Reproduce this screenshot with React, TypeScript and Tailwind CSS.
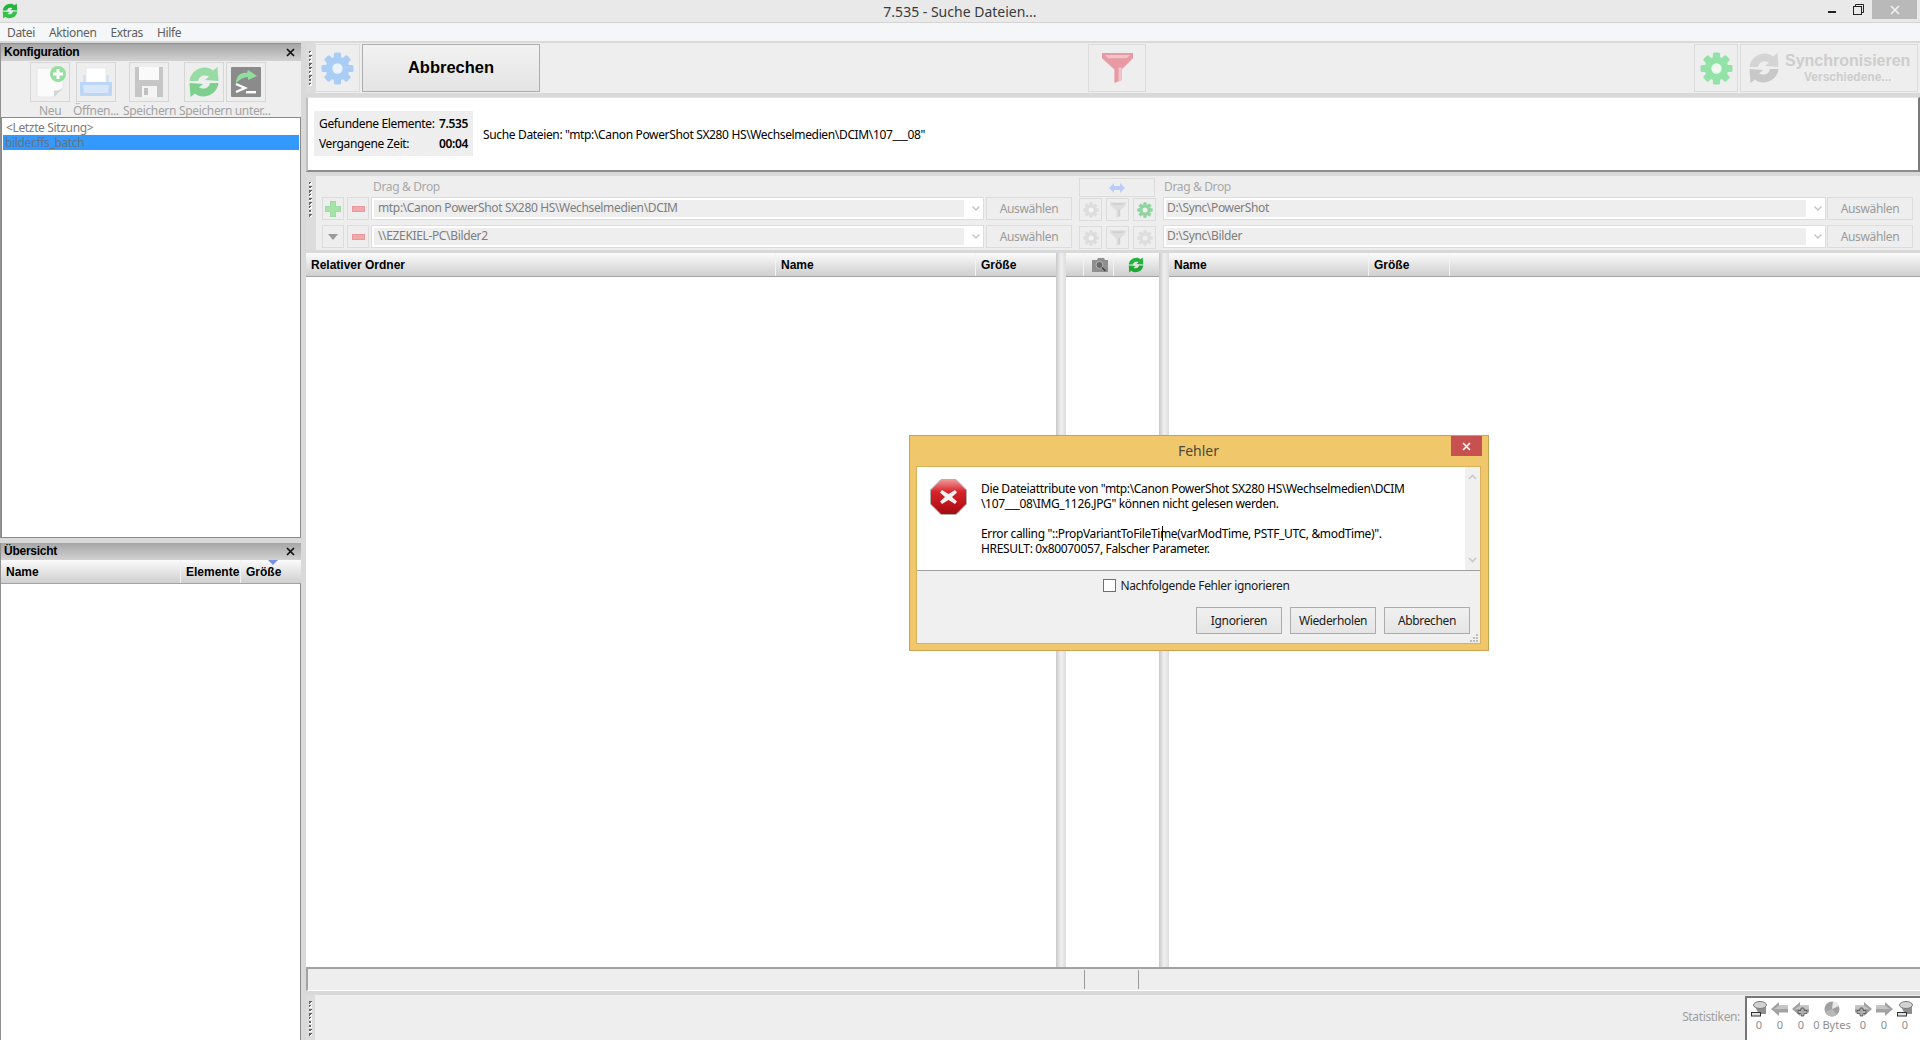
import type { ReactNode } from 'react';

const toothAngles = [0, 45, 90, 135, 180, 225, 270, 315];

function Gear({ size, color, hole }: { size: number; color: string; hole: string }) {
  return (
    <svg width={size} height={size} viewBox="0 0 32 32">
      {toothAngles.map((a) => (
        <rect key={a} x="12.5" y="0.5" width="7" height="8" rx="1.5" fill={color} transform={`rotate(${a} 16 16)`} />
      ))}
      <circle cx="16" cy="16" r="11.5" fill={color} />
      <circle cx="16" cy="16" r="5" fill={hole} />
    </svg>
  );
}

function SyncIcon({ size, top, bottom }: { size: number; top: string; bottom: string }) {
  const arrow = 'M1.5 15 C2.5 7 9 1.5 17 1.5 C20 1.5 23 2.5 25 4.5 L29.5 1 L30.5 15 L17 14 L21 10.5 C19.5 9.8 18 9.5 16 9.5 C13 9.5 10.5 12 10 15 Z';
  return (
    <svg width={size} height={size} viewBox="0 0 32 32">
      <path d={arrow} fill={top} />
      <path d={arrow} fill={bottom} transform="rotate(180 16 16)" />
    </svg>
  );
}

function Funnel({ width, height, color, stem }: { width: number; height: number; color: string; stem: string }) {
  return (
    <svg width={width} height={height} viewBox="0 0 30 29">
      <path d="M0 0 H30 V5 L19 16 V26 L12 29 V16 L0 5 Z" fill={color} />
      <path d="M3 2 H27 L24 5 H6 Z" fill={stem} />
      <path d="M16 14 H19 V26 L16 27.5 Z" fill={stem} />
    </svg>
  );
}

function NewIcon() {
  return (
    <svg width="32" height="32" viewBox="0 0 32 32">
      <path d="M3 2 H22 L29 10 V22 L20 31 H3 Z" fill="#fbfbfb" stroke="#e6e6e6" />
      <path d="M20 31 L29 22 C26 24 23 25 20 24.5 Z" fill="#d4d4d4" />
      <circle cx="24" cy="8" r="8" fill="#97df9f" />
      <path d="M22.5 3 H25.5 V6.5 H29 V9.5 H25.5 V13 H22.5 V9.5 H19 V6.5 H22.5 Z" fill="#ffffff" />
    </svg>
  );
}

function OpenIcon() {
  return (
    <svg width="32" height="30" viewBox="0 0 32 30">
      <rect x="3" y="8" width="26" height="12" fill="#cfe0f7" />
      <rect x="6" y="1" width="20" height="17" fill="#ffffff" stroke="#e9e9e9" />
      <path d="M0 15 H32 V28 Q32 29 31 29 H1 Q0 29 0 28 Z" fill="#bcd6f5" />
      <path d="M3 18 H29 L28 26 H4 Z" fill="#d7e6f9" />
    </svg>
  );
}

function SaveIcon() {
  return (
    <svg width="28" height="30" viewBox="0 0 28 30">
      <path d="M0 0 H28 V30 H0 Z" fill="#c6c6c6" />
      <rect x="4" y="0" width="20" height="13" fill="#fafafa" />
      <rect x="7" y="19" width="15" height="11" fill="#f4f4f4" />
      <rect x="9" y="21" width="4" height="7" fill="#c0c0c0" />
    </svg>
  );
}

function ScriptIcon() {
  return (
    <svg width="30" height="30" viewBox="0 0 30 30">
      <rect x="0" y="0" width="30" height="30" rx="1" fill="#8b8b8b" />
      <path d="M5 16 C5 9 10 5 16 6 L17 3 L26 9 L17 13 L17 10 C13 10 9 12 5 16 Z" fill="#93dda0" />
      <path d="M5 17 L14 21 L5 25" fill="none" stroke="#ffffff" strokeWidth="2.4" />
      <rect x="15" y="24" width="10" height="2.4" fill="#ffffff" />
    </svg>
  );
}

function CameraIcon() {
  return (
    <svg width="16" height="14" viewBox="0 0 16 14">
      <path d="M0 2 H5 L6 0 H12 L13 2 H16 V14 H0 Z" fill="#8f8f8f" />
      <circle cx="7.5" cy="7" r="3.5" fill="#6a6a6a" stroke="#b5b5b5" />
      <path d="M10 9.5 L13.5 13" stroke="#444" strokeWidth="1.6" />
    </svg>
  );
}

function Tool({ children, className }: { children: ReactNode; className?: string }) {
  return (
    <div className={`w-[40px] h-[40px] border border-[#d6d6d6] flex items-center justify-center shrink-0 ${className ?? ''}`}>{children}</div>
  );
}

function Grip({ className }: { className?: string }) {
  return (
    <div className={`w-[9px] shrink-0 bg-[#dcdcdc] flex flex-col items-center gap-[1px] ${className ?? ''}`}>
      {Array.from({ length: 9 }).map((_, i) => (
        <span key={i} className="w-[3px] h-[3px] bg-[linear-gradient(135deg,#666_50%,#fff_50%)]" />
      ))}
    </div>
  );
}

function PanelHeader({ title }: { title: string }) {
  return (
    <div className="h-[17px] shrink-0 bg-linear-to-b from-[#a6a6a6] to-[#d2d2d2] flex items-center justify-between pl-[3px] pr-[4px]">
      <span className="font-['Liberation_Sans',sans-serif] font-bold text-[12px] tracking-[-0.25px] text-black pb-[2px]">{title}</span>
      <svg width="11" height="11" viewBox="0 0 11 11" className="mr-[1px]">
        <path d="M2 2 L9 9 M9 2 L2 9" stroke="#111" strokeWidth="1.7" />
      </svg>
    </div>
  );
}

function HeadCell({ label, className, children }: { label?: string; className?: string; children?: ReactNode }) {
  return (
    <div className={`h-full border-r border-[#f2f2f2] pl-[5px] flex items-center font-['Liberation_Sans',sans-serif] font-bold text-[12px] tracking-normal text-black shrink-0 ${className ?? ''}`}>
      {label}
      {children}
    </div>
  );
}

function TableHead({ children }: { children: ReactNode }) {
  return (
    <div className="h-[24px] shrink-0 flex bg-linear-to-b from-[#fbfbfb] to-[#cfcfcf] border-b border-[#a3a3a3]">{children}</div>
  );
}

function Small({ children, className }: { children: ReactNode; className?: string }) {
  return (
    <div className={`h-[23px] border border-[#dcdcdc] flex items-center justify-center shrink-0 ${className ?? ''}`}>{children}</div>
  );
}

function Combo({ value, width, inner }: { value: string; width: string; inner: string }) {
  return (
    <div className={`h-[23px] border border-[#dcdcdc] bg-white flex items-center shrink-0 p-[2px] ${width}`}>
      <div className={`h-full bg-[#eeeeee] flex items-center pb-[1px] text-[12px] text-[#7d7d7d] ${inner}`}>{value}</div>
      <svg width="10" height="7" viewBox="0 0 10 7" className="ml-[7px]">
        <path d="M1.5 1.5 L5 5 L8.5 1.5" fill="none" stroke="#c4c4c4" strokeWidth="1.4" />
      </svg>
    </div>
  );
}

function Picker({ className }: { className: string }) {
  return <Small className={`w-[86px] text-[12px] text-[#9a9a9a] ${className}`}>Auswählen</Small>;
}

function MidGears({ green }: { green?: boolean }) {
  return (
    <div className="flex items-start gap-[4px] mt-[1px] ml-[7px] mr-[7px]">
      <Small className="w-[23px]"><Gear size={16} color="#dddddd" hole="#f4f4f4" /></Small>
      <Small className="w-[23px]"><Funnel width={16} height={18} color="#dedede" stem="#cfcfcf" /></Small>
      <Small className="w-[23px]"><Gear size={16} color={green ? '#8fd59f' : '#dddddd'} hole="#eeeeee" /></Small>
    </div>
  );
}

function Disk() {
  return (
    <svg width="16" height="16" viewBox="0 0 16 16">
      <path d="M3 4 L8 13 H15 V4 Z" fill="#8f8f8f" />
      <ellipse cx="9" cy="4" rx="6.5" ry="3.5" fill="#d2d2d2" stroke="#7a7a7a" />
      <rect x="0.5" y="11.5" width="9" height="3.5" fill="#e2e2e2" stroke="#333" />
    </svg>
  );
}

function StatArrow({ flip, plus }: { flip?: boolean; plus?: boolean }) {
  return (
    <svg width="18" height="16" viewBox="0 0 18 16" className={flip ? '-scale-x-100' : ''}>
      <path d="M0 8 L8 1 V4.5 H17 V11.5 H8 V15 Z" fill="#a2a2a2" />
      <path d="M8 4.5 H17 V8 H3 Z" fill="#c4c4c4" />
      {plus ? <path d="M9 7 H12 V9.5 H15 V12.5 H12 V15 H9 V12.5 H6 V9.5 H9 Z" fill="#b0b0b0" stroke="#444" strokeWidth="0.7" /> : null}
    </svg>
  );
}

function Pie() {
  return (
    <svg width="18" height="16" viewBox="0 0 18 16">
      <circle cx="9" cy="8" r="7.5" fill="#a0a0a0" />
      <path d="M9 8 L16 5 A7.5 7.5 0 0 0 10 0.6 Z" fill="#e8e8e8" />
      <path d="M9 8 L2 11 A7.5 7.5 0 0 0 14 13.5 Z" fill="#b8b8b8" />
    </svg>
  );
}

function StatCell({ icon, value, className }: { icon: ReactNode; value: string; className: string }) {
  return (
    <div className={`flex flex-col items-center shrink-0 ${className}`}>
      <div className="h-[18px] flex items-center">{icon}</div>
      <span className="text-[11px] leading-[14px] tracking-normal text-[#8e8e8e]">{value}</span>
    </div>
  );
}

function DialogButton({ label }: { label: string }) {
  return (
    <div className="w-[86px] h-[27px] border border-[#acacac] bg-linear-to-b from-[#f0f0f0] to-[#e5e5e5] flex items-center justify-center text-[12px] text-[#1a1a1a]">
      {label}
    </div>
  );
}

export default function App() {
  return (
    <div className="w-[1920px] h-[1040px] overflow-hidden relative flex flex-col bg-[#d9d9d9] font-['Noto_Sans',sans-serif] tracking-[-0.35px]">
      {/* title bar */}
      <div className="h-[23px] shrink-0 bg-[#e9e9e9] border-b border-[#d4d4d4] grid grid-cols-[1fr_auto_1fr]">
        <div className="pl-[2px] pt-[3px]">
          <SyncIcon size={16} top="#22b53c" bottom="#35c24c" />
        </div>
        <div className="text-[14px] leading-[23px] text-[#3a3a3a] tracking-normal">7.535 - Suche Dateien...</div>
        <div className="flex justify-end items-start pr-[3px]">
          <div className="w-[8px] h-[2px] bg-[#222] mt-[11px] mr-[17px]" />
          <svg width="11" height="11" viewBox="0 0 11 11" className="mt-[4px] mr-[8px]">
            <rect x="0.5" y="2.5" width="8" height="8" fill="none" stroke="#222" />
            <path d="M2.5 2.5 V0.5 H10.5 V8.5 H8.5" fill="none" stroke="#222" />
          </svg>
          <div className="w-[45px] h-[19px] bg-[#b9b9b9] flex items-center justify-center">
            <svg width="10" height="10" viewBox="0 0 10 10">
              <path d="M1 1 L9 9 M9 1 L1 9" stroke="#f2f2f2" strokeWidth="1.6" />
            </svg>
          </div>
        </div>
      </div>
      {/* menu */}
      <div className="h-[18px] shrink-0 bg-[#f5f6f7] flex items-center pl-[7px] pt-[2px] gap-[14px] text-[12px] text-[#5e5e5e]">
        <span>Datei</span>
        <span>Aktionen</span>
        <span>Extras</span>
        <span>Hilfe</span>
      </div>

      <div className="flex-1 min-h-0 flex pt-[2px]">
        {/* left column */}
        <div className="w-[301px] mr-[5px] shrink-0 flex flex-col">
          <div className="h-[495px] shrink-0 flex flex-col border-t border-l border-[#8f8f8f] bg-[#eeeeee]">
            <PanelHeader title="Konfiguration" />
            <div className="h-[56px] shrink-0 pt-[1px]">
              <div className="flex pl-[29px]">
                <Tool><NewIcon /></Tool>
                <Tool className="ml-[6px]"><OpenIcon /></Tool>
                <Tool className="ml-[13px]"><SaveIcon /></Tool>
                <Tool className="ml-[15px]"><SyncIcon size={32} top="#97dca4" bottom="#7ccf8d" /></Tool>
                <Tool className="ml-[2px]"><ScriptIcon /></Tool>
              </div>
              <div className="flex text-[12px] leading-[17px] text-[#a3a3a3] whitespace-nowrap">
                <span className="w-[69px] pl-[38px]">Neu</span>
                <span className="w-[52px] pl-[3px]">Öffnen...</span>
                <span className="w-[57px] pl-[1px]">Speichern</span>
                <span>Speichern unter...</span>
              </div>
            </div>
            <div className="flex-1 min-h-0 bg-white border border-[#8a8a8a] p-[1px] text-[12px] leading-[15px]">
              <div className="pl-[3px] pt-[1px] h-[16px] text-[#7b7b7b]">&lt;Letzte Sitzung&gt;</div>
              <div className="h-[15px] bg-[#3399ff] pl-[2px] text-[#63737f]">bilder.ffs_batch</div>
            </div>
          </div>
          <div className="h-[5px] shrink-0" />
          <div className="flex-1 min-h-0 flex flex-col border-l border-[#8f8f8f]">
            <PanelHeader title="Übersicht" />
            <div className="relative shrink-0">
              <TableHead>
                <HeadCell label="Name" className="w-[180px]" />
                <HeadCell label="Elemente" className="w-[60px]" />
                <HeadCell label="Größe" className="flex-1 border-r-0" />
              </TableHead>
              <div className="absolute left-[267px] top-0 w-0 h-0 border-l-[5px] border-r-[5px] border-t-[5px] border-l-transparent border-r-transparent border-t-[#7a8fe0]" />
            </div>
            <div className="flex-1 min-h-0 bg-white border-r border-[#8a8a8a]" />
          </div>
        </div>

        {/* right column */}
        <div className="flex-1 min-w-0 flex flex-col">
          {/* main toolbar */}
          <div className="h-[50px] shrink-0 flex bg-[#eeeeee]">
            <Grip className="pt-[8px]" />
            <div className="w-[45px] h-[48px] mt-[1px] border border-[#dcdcdc] flex items-center justify-center shrink-0">
              <Gear size={33} color="#a9cdf5" hole="#eaf2fc" />
            </div>
            <div className="w-[178px] h-[48px] mt-[1px] ml-[2px] border border-[#acacac] bg-linear-to-b from-[#f2f2f2] to-[#e4e4e4] flex items-center justify-center pb-[1px] font-['Liberation_Sans',sans-serif] font-bold text-[16.5px] tracking-normal text-black shrink-0">
              Abbrechen
            </div>
            <div className="w-[58px] h-[48px] mt-[1px] ml-[548px] border border-[#dcdcdc] flex items-center justify-center shrink-0">
              <Funnel width={31} height={30} color="#e79aa3" stem="#f4c3c7" />
            </div>
            <div className="w-[44px] h-[48px] mt-[1px] ml-[548px] border border-[#dcdcdc] flex items-center justify-center shrink-0">
              <Gear size={33} color="#93e2a8" hole="#eef9f0" />
            </div>
            <div className="w-[178px] h-[48px] mt-[1px] ml-[2px] border border-[#dcdcdc] flex items-center pl-[7px] shrink-0">
              <SyncIcon size={32} top="#d4d4d4" bottom="#c8c8c8" />
              <div className="flex flex-col items-center ml-[5px] font-['Liberation_Sans',sans-serif] font-bold tracking-normal text-[#cdcdcd]">
                <span className="text-[16px] leading-[19px]">Synchronisieren</span>
                <span className="text-[12px] leading-[15px]">Verschiedene...</span>
              </div>
            </div>
          </div>
          <div className="h-[4px] shrink-0" />

          {/* progress */}
          <div className="h-[75px] shrink-0 bg-white border-l-2 border-b-2 border-r-2 border-t border-l-[#c0c0c0] border-t-[#e4e4e4] border-b-[#8c8c8c] border-r-[#7a7a7a] flex items-center pl-[6px] pb-[1px]">
            <div className="w-[159px] h-[45px] bg-[#eeeeee] pl-[5px] pr-[5px] pt-[1px] flex flex-col justify-center text-[12px] leading-[20px] text-black shrink-0 whitespace-nowrap">
              <div className="flex justify-between"><span>Gefundene Elemente:</span><span className="font-semibold">7.535</span></div>
              <div className="flex justify-between"><span>Vergangene Zeit:</span><span className="font-semibold">00:04</span></div>
            </div>
            <span className="ml-[10px] mt-[2px] text-[12px] text-black whitespace-nowrap">Suche Dateien: "mtp:\Canon PowerShot SX280 HS\Wechselmedien\DCIM\107___08"</span>
          </div>
          <div className="h-[4px] shrink-0" />

          {/* folder pairs */}
          <div className="h-[74px] shrink-0 flex bg-[#eeeeee]">
            <Grip className="pt-[6px]" />
            <div className="flex-1 min-w-0 border-l border-[#dcdcdc] pl-[6px] flex flex-col">
              <div className="h-[21px] flex items-end text-[12px] text-[#a8a8a8] leading-[18px]">
                <span className="w-[51px] shrink-0" />
                <span className="w-[706px] shrink-0 mb-[1px]">Drag &amp; Drop</span>
                <div className="w-[76px] h-[19px] border border-[#dcdcdc] flex items-center justify-center shrink-0">
                  <svg width="16" height="10" viewBox="0 0 16 10">
                    <path d="M0 5 L5 0 V3 H11 V0 L16 5 L11 10 V7 H5 V10 Z" fill="#b9cdf8" />
                  </svg>
                </div>
                <span className="pl-[9px] mb-[1px]">Drag &amp; Drop</span>
              </div>
              <div className="flex items-start">
                <Small className="w-[22px]">
                  <svg width="16" height="16" viewBox="0 0 16 16"><path d="M5.5 0 H10.5 V5.5 H16 V10.5 H10.5 V16 H5.5 V10.5 H0 V5.5 H5.5 Z" fill="#a5e3a8" stroke="#86cf92" strokeWidth="0.6" /></svg>
                </Small>
                <Small className="w-[22px] ml-[3px]">
                  <div className="w-[13px] h-[6px] bg-[#f2a7ab] border border-[#eb989c]" />
                </Small>
                <Combo value="mtp:\Canon PowerShot SX280 HS\Wechselmedien\DCIM" width="w-[613px] ml-[2px]" inner="w-[592px] pl-[4px]" />
                <Picker className="ml-[2px]" />
                <MidGears green />
                <Combo value="D:\Sync\PowerShot" width="w-[663px]" inner="w-[641px] pl-[1px]" />
                <Picker className="ml-[1px]" />
              </div>
              <div className="flex items-start mt-[4px]">
                <Small className="w-[22px]">
                  <div className="w-0 h-0 border-l-[5px] border-r-[5px] border-t-[6px] border-l-transparent border-r-transparent border-t-[#9a9a9a]" />
                </Small>
                <Small className="w-[22px] ml-[3px]">
                  <div className="w-[13px] h-[6px] bg-[#f2a7ab] border border-[#eb989c]" />
                </Small>
                <Combo value="\\EZEKIEL-PC\Bilder2" width="w-[613px] ml-[2px]" inner="w-[592px] pl-[4px]" />
                <Picker className="ml-[2px]" />
                <MidGears />
                <Combo value="D:\Sync\Bilder" width="w-[663px]" inner="w-[641px] pl-[1px]" />
                <Picker className="ml-[1px]" />
              </div>
            </div>
          </div>
          <div className="h-[3px] shrink-0" />

          {/* grids */}
          <div className="flex-1 min-h-0 flex bg-white">
            <div className="w-[750px] shrink-0 flex flex-col">
              <TableHead>
                <HeadCell label="Relativer Ordner" className="w-[470px]" />
                <HeadCell label="Name" className="w-[200px]" />
                <HeadCell label="Größe" className="flex-1 border-r-0" />
              </TableHead>
            </div>
            <div className="w-[10px] shrink-0 bg-linear-to-r from-[#c8c8c8] via-[#f0f0f0] to-[#dddddd]" />
            <div className="w-[93px] shrink-0 flex flex-col">
              <TableHead>
                <HeadCell className="w-[18px] pl-0" />
                <HeadCell className="w-[30px] justify-center pl-0 pr-[2px]">
                  <CameraIcon />
                </HeadCell>
                <div className="flex-1 flex items-center justify-center pr-[2px]">
                  <SyncIcon size={16} top="#22b53c" bottom="#1fa835" />
                </div>
              </TableHead>
            </div>
            <div className="w-[10px] shrink-0 bg-linear-to-r from-[#c8c8c8] via-[#f0f0f0] to-[#dddddd]" />
            <div className="flex-1 min-w-0 flex flex-col">
              <TableHead>
                <HeadCell label="Name" className="w-[200px]" />
                <HeadCell label="Größe" className="w-[81px]" />
              </TableHead>
            </div>
          </div>

          {/* status bar */}
          <div className="h-[24px] shrink-0 flex bg-[#eeeeee] border-t-2 border-b border-l-2 border-t-[#a3a3a3] border-b-white border-l-[#a3a3a3]">
            <div className="w-[777px] shrink-0 border-r border-[#9a9a9a] my-[1px]" />
            <div className="w-[54px] shrink-0 border-r border-[#9a9a9a] my-[1px]" />
          </div>
          <div className="h-[4px] shrink-0" />

          {/* bottom toolbar */}
          <div className="h-[45px] shrink-0 flex bg-[#eeeeee]">
            <Grip className="pt-[6px]" />
            <div className="flex-1 flex items-center justify-end">
              <span className="text-[12px] text-[#a0a0a0] mr-[5px] mb-[1px]">Statistiken:</span>
              <div className="w-[175px] h-[44px] bg-white border-t-2 border-l-2 border-[#777777] flex items-start pl-[2px] pt-[2px]">
                <StatCell icon={<Disk />} value="0" className="w-[20px]" />
                <StatCell icon={<StatArrow />} value="0" className="w-[20px] ml-[1px]" />
                <StatCell icon={<StatArrow plus />} value="0" className="w-[20px] ml-[1px]" />
                <StatCell icon={<Pie />} value="0 Bytes" className="w-[38px] ml-[2px]" />
                <StatCell icon={<StatArrow flip plus />} value="0" className="w-[20px] ml-[2px]" />
                <StatCell icon={<StatArrow flip />} value="0" className="w-[20px] ml-[1px]" />
                <StatCell icon={<Disk />} value="0" className="w-[20px] ml-[1px]" />
              </div>
            </div>
          </div>
        </div>
      </div>

      {/* error dialog */}
      <div className="absolute left-[909px] top-[435px] w-[580px] h-[216px] bg-[#f0c76b] border border-[#c9a14f] pl-[6px] pr-[7px] pb-[6px] flex flex-col">
        <div className="h-[30px] shrink-0 relative flex items-center justify-center text-[14px] text-[#4a4a3a] tracking-normal pb-[1px]">
          Fehler
          <div className="absolute right-[-1px] top-0 w-[31px] h-[20px] bg-[#c75050] flex items-center justify-center">
            <svg width="9" height="9" viewBox="0 0 9 9"><path d="M1 1 L8 8 M8 1 L1 8" stroke="#fff" strokeWidth="1.6" /></svg>
          </div>
        </div>
        <div className="flex-1 min-h-0 flex flex-col border border-[#d7b05a] bg-[#f0f0f0] relative">
          <div className="h-[104px] shrink-0 flex bg-white border-b border-[#a0a0a0]">
            <div className="ml-[13px] mt-[12px] shrink-0">
              <svg width="37" height="36" viewBox="0 0 37 36">
                <defs>
                  <linearGradient id="err" x1="0" y1="0" x2="0" y2="1">
                    <stop offset="0" stopColor="#f29a9a" />
                    <stop offset="0.35" stopColor="#d8232a" />
                    <stop offset="1" stopColor="#a50a10" />
                  </linearGradient>
                </defs>
                <path d="M11 0.5 H26 L36.5 11 V25 L26 35.5 H11 L0.5 25 V11 Z" fill="url(#err)" stroke="#b0b0b0" />
                <path d="M12 11 L18.5 15 L25 11 L27 13.5 L22 18 L27 22.5 L25 25 L18.5 21 L12 25 L10 22.5 L15 18 L10 13.5 Z" fill="#f7f2f2" />
              </svg>
            </div>
            <div className="ml-[14px] mt-[14px] flex-1 text-[12px] leading-[15px] text-black whitespace-pre relative">
              {'Die Dateiattribute von "mtp:\\Canon PowerShot SX280 HS\\Wechselmedien\\DCIM\n\\107___08\\IMG_1126.JPG" können nicht gelesen werden.\n\nError calling "::PropVariantToFileTime(varModTime, PSTF_UTC, &modTime)".\nHRESULT: 0x80070057, Falscher Parameter.'}
              <div className="absolute left-[181px] top-[45px] w-px h-[15px] bg-black" />
            </div>
            <div className="w-[15px] shrink-0 bg-[#f0f0f0] flex flex-col items-center justify-between py-[7px]">
              <svg width="9" height="6" viewBox="0 0 9 6"><path d="M1 5 L4.5 1.5 L8 5" fill="none" stroke="#c8c8c8" strokeWidth="1.6" /></svg>
              <svg width="9" height="6" viewBox="0 0 9 6"><path d="M1 1 L4.5 4.5 L8 1" fill="none" stroke="#c8c8c8" strokeWidth="1.6" /></svg>
            </div>
          </div>
          <div className="flex items-center justify-center h-[30px] shrink-0 text-[12px] text-[#1a1a1a] pr-[4px] pb-[1px]">
            <div className="w-[13px] h-[13px] bg-white border border-[#707070] mr-[4px]" />
            Nachfolgende Fehler ignorieren
          </div>
          <div className="flex justify-end gap-[8px] pr-[10px] pt-[6px]">
            <DialogButton label="Ignorieren" />
            <DialogButton label="Wiederholen" />
            <DialogButton label="Abbrechen" />
          </div>
          <svg width="9" height="9" viewBox="0 0 9 9" className="absolute right-[1px] bottom-[1px]">
            <path d="M6 1 h2 v2 h-2 Z M3 4 h2 v2 h-2 Z M6 4 h2 v2 h-2 Z M0 7 h2 v2 h-2 Z M3 7 h2 v2 h-2 Z M6 7 h2 v2 h-2 Z" fill="#bcbcbc" />
          </svg>
        </div>
      </div>
    </div>
  );
}
